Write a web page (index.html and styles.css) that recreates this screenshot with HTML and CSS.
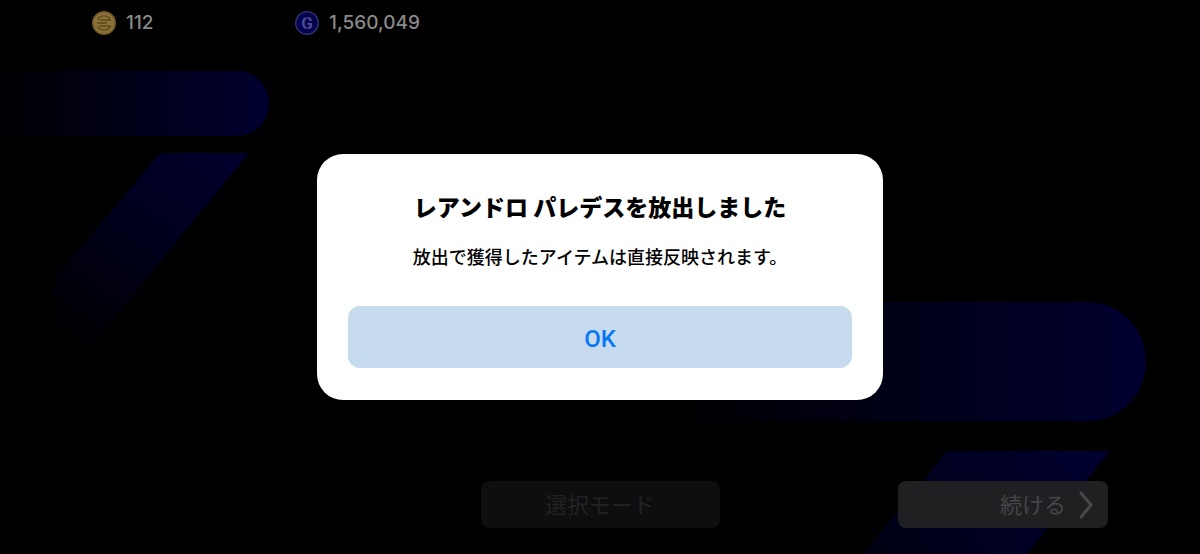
FILE: index.html
```html
<!DOCTYPE html>
<html lang="ja">
<head>
  <meta charset="utf-8">
  <meta name="viewport" content="width=device-width, initial-scale=1">
  <title>放出</title>
  <link rel="stylesheet" href="styles.css">
</head>
<body>
  <div class="screen">
    <svg class="backdrop" viewBox="0 0 1200 554" preserveAspectRatio="xMidYMid slice" aria-hidden="true">
      <defs>
        <linearGradient id="bar-small" gradientUnits="userSpaceOnUse" x1="0" y1="0" x2="269" y2="0">
          <stop offset="0" stop-color="#000003"/>
          <stop offset="0.5" stop-color="#000019"/>
          <stop offset="1" stop-color="#00002f"/>
        </linearGradient>
        <linearGradient id="bar-large" gradientUnits="userSpaceOnUse" x1="660" y1="0" x2="1146" y2="0">
          <stop offset="0" stop-color="#000000"/>
          <stop offset="0.5" stop-color="#000018"/>
          <stop offset="1" stop-color="#00002f"/>
        </linearGradient>
        <linearGradient id="leg-small" gradientUnits="userSpaceOnUse" x1="235" y1="150" x2="85" y2="360">
          <stop offset="0" stop-color="#00002d"/>
          <stop offset="0.5" stop-color="#00001a"/>
          <stop offset="1" stop-color="#000000"/>
        </linearGradient>
        <linearGradient id="leg-large" gradientUnits="userSpaceOnUse" x1="1100" y1="451" x2="880" y2="620">
          <stop offset="0" stop-color="#000030"/>
          <stop offset="1" stop-color="#000010"/>
        </linearGradient>
      </defs>
      <path fill="url(#bar-small)" d="M0 71H238A31 32.500 0 0 1 238 136H0Z"/>
      <path fill="url(#leg-small)" d="M160 153H249L98 338Q84 352 58 352L54 330V290Q54 279 62 270Z"/>
      <path fill="url(#bar-large)" d="M640 302H1088A58 59.500 0 0 1 1088 421H640Z"/>
      <path fill="url(#leg-large)" d="M947 451H1110L1027 554H863Z"/>
    </svg>

    <header class="wallet">
      <div class="currency">
        <svg class="coin" viewBox="0 0 24 24" aria-hidden="true">
          <circle cx="12" cy="12" r="12" fill="#6f5824"/>
          <circle cx="12" cy="12" r="10.500" fill="#8c7339"/>
          <path fill="none" stroke="#5e4a1c" stroke-width="1.400" d="M5.500 9A7.200 7.200 0 0 1 18.500 9H8M5 12H15M5.500 15A7.200 7.200 0 0 0 18.500 15H8"/>
        </svg>
        <span>112</span>
      </div>
      <div class="currency">
        <svg class="coin" viewBox="0 0 24 24" aria-hidden="true">
          <circle cx="12" cy="12" r="11.300" fill="#03034e" stroke="#30306e" stroke-width="1.400"/>
          <text class="coin-letter" x="12" y="18" text-anchor="middle">G</text>
          <path stroke="#03034e" stroke-width="1" d="M12 5V9M12 15.500V19"/>
        </svg>
        <span>1,560,049</span>
      </div>
    </header>

    <footer class="actions">
      <button type="button" class="action action-mode" disabled>選択モード</button>
      <button type="button" class="action action-next">
        続ける
        <svg class="chevron" viewBox="0 0 16 28" aria-hidden="true">
          <path d="M3 4L13 16L3 28"/>
        </svg>
      </button>
    </footer>
  </div>

  <div class="overlay">
    <section class="dialog" role="dialog" aria-modal="true" aria-labelledby="dialog-title">
      <h1 class="dialog-title" id="dialog-title">レアンドロ パレデスを放出しました</h1>
      <p class="dialog-text">放出で獲得したアイテムは直接反映されます。</p>
      <button type="button" class="dialog-ok">OK</button>
    </section>
  </div>
</body>
</html>
```
FILE: styles.css
```css
body, h1, p {
  margin: 0;
}

body {
  background-color: #000;
  font-family: "Noto Sans CJK JP", sans-serif;
}

button {
  border: 0;
  font-family: inherit;
}

.screen {
  position: relative;
  display: flex;
  flex-direction: column;
  justify-content: space-between;
  min-height: 100vh;
}

/* Blue shapes behind everything */
.backdrop {
  position: absolute;
  top: 0;
  left: 0;
  width: 100%;
  height: 100%;
}

/* Coin counters */
.wallet {
  position: relative;
  display: flex;
  padding: 11px 92px;
}

.currency {
  display: flex;
  align-items: center;
  gap: 10px;
  min-width: 203px;
  color: #8a8a8a;
  font-family: Inter, sans-serif;
  font-size: 19px;
  font-weight: 500;
  line-height: 24px;
}

.coin {
  width: 24px;
  height: 24px;
}

.coin-letter {
  fill: #4c4c90;
  font-family: Roboto, sans-serif;
  font-size: 17px;
  font-weight: 700;
}

/* Bottom buttons */
.actions {
  position: relative;
  display: grid;
  grid-template-columns: 1fr 239px 1fr;
  padding: 0 92px 26px;
}

.action {
  height: 47px;
  padding: 0 14px 4px;
  border-radius: 8px;
  font-size: 22px;
  line-height: 32px;
}

.action-mode {
  grid-column: 2;
  background-color: #0e0e10;
  color: #222224;
}

.action-next {
  display: flex;
  align-items: center;
  justify-content: flex-end;
  gap: 12px;
  justify-self: end;
  width: 210px;
  background-color: #202022;
  color: #464648;
}

.chevron {
  width: 16px;
  height: 28px;
  overflow: visible;
  fill: none;
  stroke: #48484a;
  stroke-width: 3;
  stroke-linecap: round;
}

/* Message dialog */
.overlay {
  position: fixed;
  inset: 0;
  display: flex;
  align-items: center;
  justify-content: center;
  padding: 16px;
}

.dialog {
  box-sizing: border-box;
  width: 100%;
  max-width: 566px;
  padding: 34px 31px 32px;
  border-radius: 26px;
  background-color: #fff;
  color: #000;
  text-align: center;
}

.dialog-title {
  font-size: 23px;
  font-weight: 900;
  line-height: 36px;
}

.dialog-text {
  margin-top: 18px;
  font-size: 18px;
  font-weight: 500;
  line-height: 28px;
}

.dialog-ok {
  width: 100%;
  height: 62px;
  margin-top: 36px;
  padding: 4px 0 0;
  border-radius: 12px;
  background-color: #c7dbee;
  color: #0877f5;
  font-family: Roboto, sans-serif;
  font-size: 24px;
  font-weight: 500;
}
```
